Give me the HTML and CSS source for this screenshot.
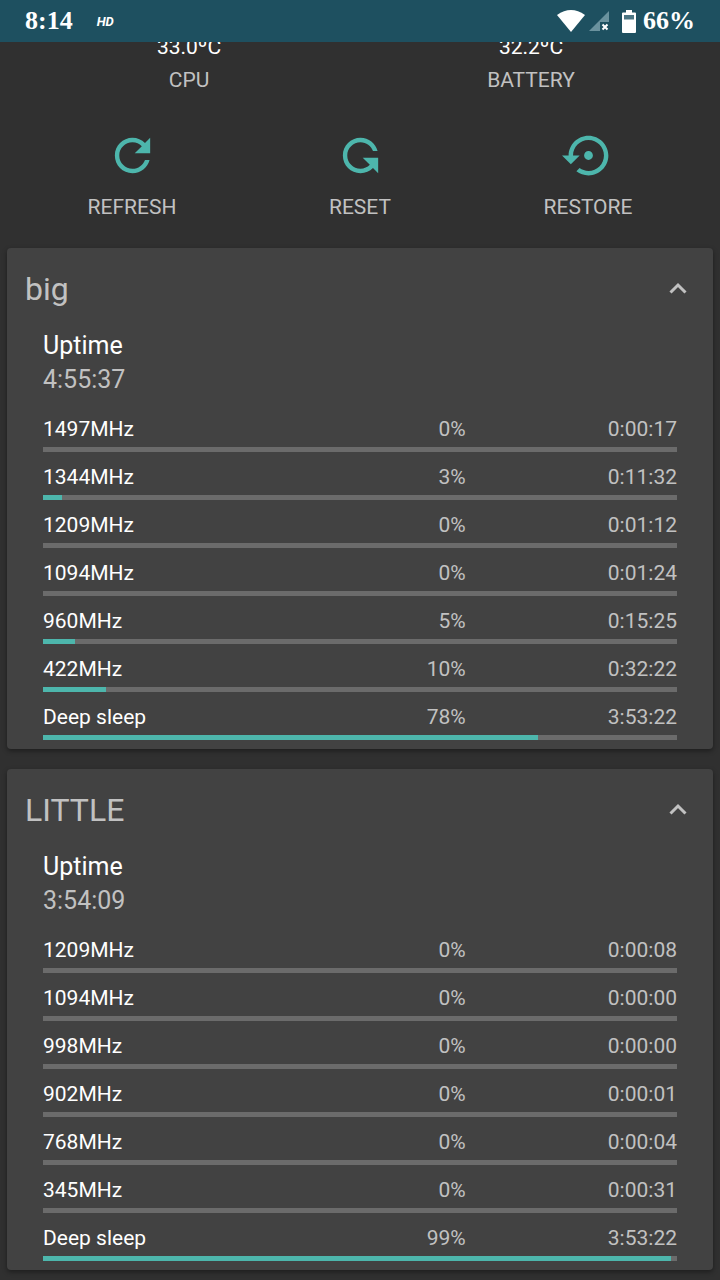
FILE: index.html
```html
<!DOCTYPE html>
<html lang="en">
<head>
  <meta charset="UTF-8">
  <meta name="viewport" content="width=device-width, initial-scale=1">
  <title>CPU Times</title>
  <link rel="stylesheet" href="styles.css">
</head>
<body>
  <header class="status-bar">
    <span class="clock">8:14</span>
    <span class="hd">HD</span>
    <div class="status-icons">
      <svg class="wifi" viewBox="0 0 28 22" aria-hidden="true"><path d="M0 5Q14-5 28 5L14 22z" fill="#fff"/></svg>
      <svg class="signal" viewBox="0 0 20 20" aria-hidden="true">
        <path d="M20 0v11h-9v9H0z" fill="#6a929e"/>
        <path d="M13.500 13.500l5 5m0-5l-5 5" stroke="#fff" stroke-width="2"/>
      </svg>
      <svg class="battery" viewBox="0 0 14 23" aria-hidden="true">
        <path d="M4 0h6v2.500h3q1 0 1 1V22q0 1-1 1H1q-1 0-1-1V3.500q0-1 1-1h3z" fill="#fff"/>
        <path d="M2 5h10v4.500H2z" fill="#4b7583"/>
      </svg>
      <span class="level">66%</span>
    </div>
  </header>

  <main class="content">
    <!-- Temperatures, partly scrolled under the status bar -->
    <div class="temps">
      <div><div class="temp">33.0ºC</div><div class="label">CPU</div></div>
      <div><div class="temp">32.2ºC</div><div class="label">BATTERY</div></div>
    </div>

    <div class="actions">
      <button type="button" class="action">
        <svg viewBox="0 0 24 24" aria-hidden="true"><path d="M17.650 6.350C16.200 4.900 14.210 4 12 4c-4.420 0-7.990 3.580-7.990 8s3.570 8 7.990 8c3.730 0 6.840-2.550 7.730-6h-2.080c-.82 2.330-3.040 4-5.650 4-3.310 0-6-2.690-6-6s2.690-6 6-6c1.660 0 3.140.69 4.220 1.780L13 11h7V4z"/></svg>
        <span>REFRESH</span>
      </button>
      <button type="button" class="action">
        <svg class="flip" viewBox="0 0 24 24" aria-hidden="true"><path d="M17.650 6.350C16.200 4.900 14.210 4 12 4c-4.420 0-7.990 3.580-7.990 8s3.570 8 7.990 8c3.730 0 6.840-2.550 7.730-6h-2.080c-.82 2.330-3.040 4-5.650 4-3.310 0-6-2.690-6-6s2.690-6 6-6c1.660 0 3.140.69 4.220 1.780L13 11h7V4z"/></svg>
        <span>RESET</span>
      </button>
      <button type="button" class="action">
        <svg viewBox="0 0 24 24" aria-hidden="true"><path d="M14 12c0-1.100-.9-2-2-2s-2 .9-2 2 .9 2 2 2 2-.9 2-2zm-2-9c-4.970 0-9 4.030-9 9H0l4 4 4-4H5c0-3.870 3.130-7 7-7s7 3.130 7 7-3.130 7-7 7c-1.510 0-2.910-.49-4.060-1.300l-1.420 1.440C8.040 20.300 9.940 21 12 21c4.970 0 9-4.030 9-9s-4.030-9-9-9z"/></svg>
        <span>RESTORE</span>
      </button>
    </div>

    <section class="card">
      <div class="card-header">
        <h2>big</h2>
        <button type="button" class="collapse" aria-label="Collapse big">
          <svg viewBox="0 0 18 14" aria-hidden="true"><path d="M1.500 10.500L9 3l7.500 7.500"/></svg>
        </button>
      </div>
      <div class="card-body">
        <div class="uptime">Uptime</div>
        <div class="uptime-value">4:55:37</div>
        <table class="freqs">
          <tbody>
            <tr><th scope="row">1497MHz</th><td>0%</td><td>0:00:17</td></tr>
            <tr><td colspan="3" class="track"><div class="bar"><div class="fill" style="width: 0%"></div></div></td></tr>
            <tr><th scope="row">1344MHz</th><td>3%</td><td>0:11:32</td></tr>
            <tr><td colspan="3" class="track"><div class="bar"><div class="fill" style="width: 3%"></div></div></td></tr>
            <tr><th scope="row">1209MHz</th><td>0%</td><td>0:01:12</td></tr>
            <tr><td colspan="3" class="track"><div class="bar"><div class="fill" style="width: 0%"></div></div></td></tr>
            <tr><th scope="row">1094MHz</th><td>0%</td><td>0:01:24</td></tr>
            <tr><td colspan="3" class="track"><div class="bar"><div class="fill" style="width: 0%"></div></div></td></tr>
            <tr><th scope="row">960MHz</th><td>5%</td><td>0:15:25</td></tr>
            <tr><td colspan="3" class="track"><div class="bar"><div class="fill" style="width: 5%"></div></div></td></tr>
            <tr><th scope="row">422MHz</th><td>10%</td><td>0:32:22</td></tr>
            <tr><td colspan="3" class="track"><div class="bar"><div class="fill" style="width: 10%"></div></div></td></tr>
            <tr><th scope="row">Deep sleep</th><td>78%</td><td>3:53:22</td></tr>
            <tr><td colspan="3" class="track"><div class="bar"><div class="fill" style="width: 78%"></div></div></td></tr>
          </tbody>
        </table>
      </div>
    </section>

    <section class="card">
      <div class="card-header">
        <h2>LITTLE</h2>
        <button type="button" class="collapse" aria-label="Collapse LITTLE">
          <svg viewBox="0 0 18 14" aria-hidden="true"><path d="M1.500 10.500L9 3l7.500 7.500"/></svg>
        </button>
      </div>
      <div class="card-body">
        <div class="uptime">Uptime</div>
        <div class="uptime-value">3:54:09</div>
        <table class="freqs">
          <tbody>
            <tr><th scope="row">1209MHz</th><td>0%</td><td>0:00:08</td></tr>
            <tr><td colspan="3" class="track"><div class="bar"><div class="fill" style="width: 0%"></div></div></td></tr>
            <tr><th scope="row">1094MHz</th><td>0%</td><td>0:00:00</td></tr>
            <tr><td colspan="3" class="track"><div class="bar"><div class="fill" style="width: 0%"></div></div></td></tr>
            <tr><th scope="row">998MHz</th><td>0%</td><td>0:00:00</td></tr>
            <tr><td colspan="3" class="track"><div class="bar"><div class="fill" style="width: 0%"></div></div></td></tr>
            <tr><th scope="row">902MHz</th><td>0%</td><td>0:00:01</td></tr>
            <tr><td colspan="3" class="track"><div class="bar"><div class="fill" style="width: 0%"></div></div></td></tr>
            <tr><th scope="row">768MHz</th><td>0%</td><td>0:00:04</td></tr>
            <tr><td colspan="3" class="track"><div class="bar"><div class="fill" style="width: 0%"></div></div></td></tr>
            <tr><th scope="row">345MHz</th><td>0%</td><td>0:00:31</td></tr>
            <tr><td colspan="3" class="track"><div class="bar"><div class="fill" style="width: 0%"></div></div></td></tr>
            <tr><th scope="row">Deep sleep</th><td>99%</td><td>3:53:22</td></tr>
            <tr><td colspan="3" class="track"><div class="bar"><div class="fill" style="width: 99%"></div></div></td></tr>
          </tbody>
        </table>
      </div>
    </section>
  </main>
</body>
</html>
```
FILE: styles.css
```css
* {
  box-sizing: border-box;
}

body {
  margin: 0;
  background-color: #303030;
  color: #c1c1c1;
  font-family: Roboto, sans-serif;
  font-size: 21px;
}

/* Status bar */
.status-bar {
  display: flex;
  align-items: center;
  height: 42px;
  padding: 0 25px;
  background-color: #1e5060;
  color: #fff;
}

.clock,
.level {
  font-family: "Liberation Serif", serif;
  font-size: 26px;
  font-weight: bold;
  line-height: 42px;
}

.hd {
  margin-left: 24px;
  font-size: 13px;
  font-weight: bold;
  font-style: italic;
}

.status-icons {
  display: flex;
  align-items: center;
  margin-left: auto;
}

.wifi {
  width: 28px;
  height: 22px;
}

.signal {
  width: 20px;
  height: 20px;
  margin-left: 4px;
}

.battery {
  width: 14px;
  height: 23px;
  margin: 0 7px 0 13px;
}

/* Scrolled content */
.content {
  overflow: hidden;
  padding-bottom: 10px;
}

.temps {
  display: grid;
  grid-template-columns: 1fr 1fr;
  margin-top: -11px;
  padding: 0 18px;
  line-height: 33px;
  text-align: center;
}

.temp {
  color: #fff;
}

.actions {
  display: grid;
  grid-template-columns: repeat(3, 1fr);
  padding: 32px 18px 24px;
}

.action {
  display: flex;
  flex-direction: column;
  align-items: center;
  gap: 9px;
  padding: 0;
  border: none;
  background: none;
  color: inherit;
  font: inherit;
  line-height: 33px;
}

.action svg {
  width: 53px;
  height: 53px;
  fill: #4db6ac;
}

.action .flip {
  transform: scaleY(-1);
}

/* Cards */
.card {
  margin: 0 7px 20px;
  padding-bottom: 9px;
  border-radius: 4px;
  background-color: #424242;
  box-shadow: 0 2px 5px rgba(0, 0, 0, 0.4);
}

.card:last-child {
  margin-bottom: 0;
}

.card-header {
  display: flex;
  align-items: center;
  justify-content: space-between;
  height: 81px;
  padding: 0 26px 0 18px;
}

.card-header h2 {
  margin: 0;
  font-size: 32px;
  font-weight: normal;
}

.collapse {
  display: flex;
  padding: 0;
  border: none;
  background: none;
}

.collapse svg {
  width: 18px;
  height: 14px;
  fill: none;
  stroke: #c1c1c1;
  stroke-width: 3;
}

.card-body {
  padding: 0 36px;
}

.uptime,
.uptime-value {
  font-size: 25px;
  line-height: 34px;
}

.uptime {
  color: #fff;
}

/* Frequency table, each entry has its bar below */
.freqs {
  width: 100%;
  margin-top: 7px;
  border-collapse: collapse;
  table-layout: fixed;
}

.freqs th,
.freqs td {
  padding: 13px 0 5px;
  line-height: 25px;
  text-align: right;
}

.freqs th {
  color: #fff;
  font-weight: normal;
  text-align: left;
}

.freqs .track {
  padding: 0;
}

.bar {
  height: 5px;
  background-color: #6b6b6b;
}

.fill {
  height: 5px;
  background-color: #4db6ac;
}
```
